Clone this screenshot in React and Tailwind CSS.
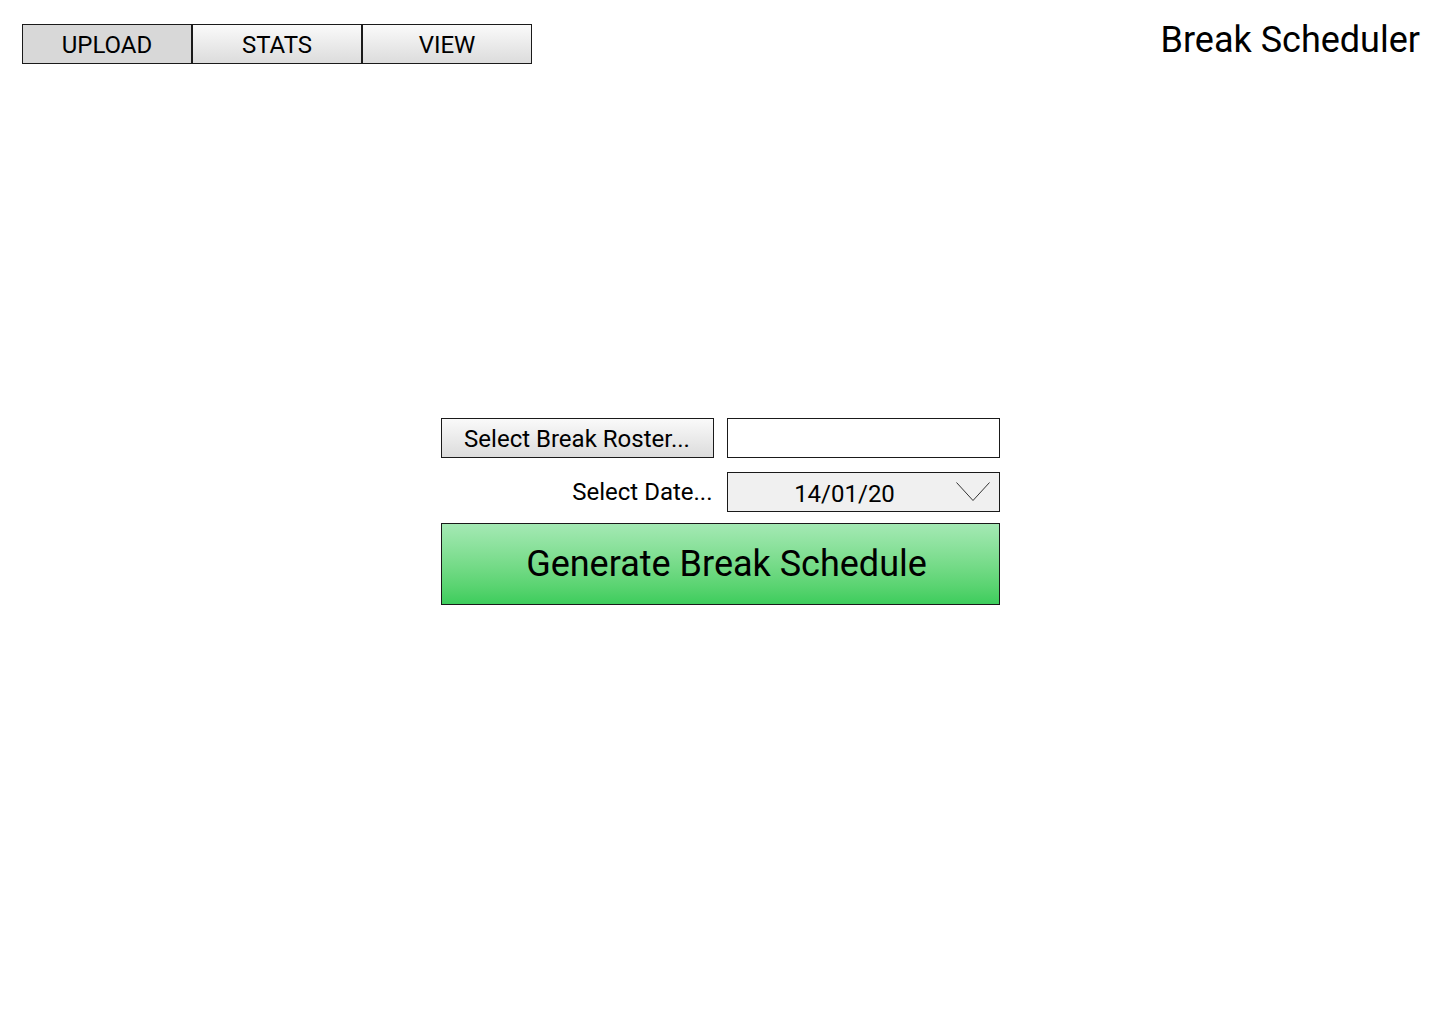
export default function App() {
    const tabs = ['UPLOAD', 'STATS', 'VIEW']
    const active = 'UPLOAD'

    return (
        <div className="min-h-screen bg-white text-black" style={{ fontFamily: 'Roboto, "Noto Sans", sans-serif' }}>
            {/* Header */}
            <div className="flex items-start justify-between pl-[22px] pr-[20px] pt-[24px]">
                <div className="flex">
                    {tabs.map((t) => (
                        <button
                            key={t}
                            className={`w-[170px] h-[40px] border border-[#1a1a1a] text-[24px] leading-none flex items-center justify-center pt-[2px] ${
                                t === active ? 'bg-[#d8d8d8]' : 'bg-gradient-to-b from-[#fafafa] to-[#dcdcdc]'
                            }`}
                        >
                            {t}
                        </button>
                    ))}
                </div>
                <h1 className="text-[36px] leading-none -mt-[2px]">Break Scheduler</h1>
            </div>

            {/* Form */}
            <div className="flex justify-center pt-[354px]">
                <div className="w-[559px] flex flex-col">
                    <div className="flex gap-[13px]">
                        <button className="w-[273px] h-[40px] border border-[#1a1a1a] bg-gradient-to-b from-[#fafafa] to-[#dcdcdc] text-[24px] leading-none pt-px">
                            Select Break Roster...
                        </button>
                        <input className="w-[273px] h-[40px] border border-[#1a1a1a] bg-white outline-none px-2 text-[24px]" />
                    </div>
                    <div className="flex gap-[13px] mt-[14px]">
                        <div className="w-[273px] h-[40px] flex items-center justify-end text-[24px] pr-px">Select Date...</div>
                        <div className="w-[273px] h-[40px] border border-[#1a1a1a] bg-[#f0f0f0] flex items-center">
                            <span className="flex-1 text-center text-[24px] leading-none pl-[6px] pt-[4px]">14/01/20</span>
                            <svg width="34" height="22" viewBox="0 0 34 22" className="mr-[9px]" fill="none">
                                <path d="M0.5 1.5 L17 19.5 L33.5 1.5" stroke="#333" strokeWidth="1" />
                            </svg>
                        </div>
                    </div>
                    <button className="mt-[11px] h-[82px] border border-[#1a1a1a] bg-gradient-to-b from-[#a4e9b4] to-[#3ccd5c] text-[36px] leading-none pl-[13px]">
                        Generate Break Schedule
                    </button>
                </div>
            </div>
        </div>
    )
}
